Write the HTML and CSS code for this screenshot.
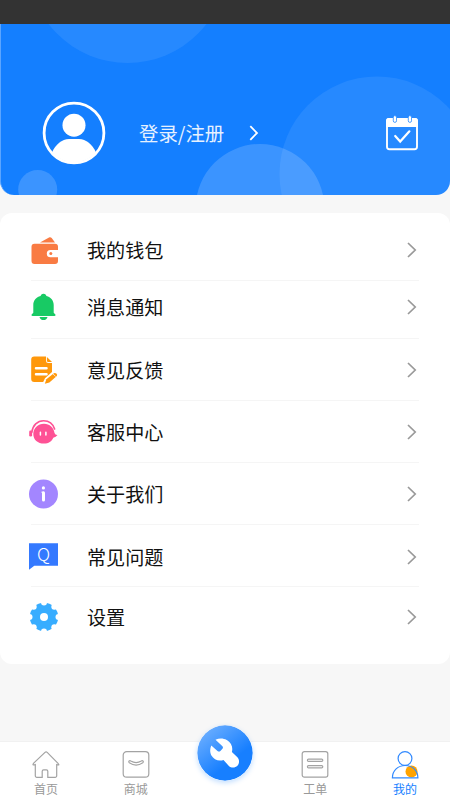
FILE: index.html
```html
<!DOCTYPE html>
<html lang="zh-CN">
<head>
<meta charset="utf-8">
<meta name="viewport" content="width=device-width, initial-scale=1">
<title>我的</title>
<link rel="stylesheet" href="styles.css">
</head>
<body>
<div class="app">
  <div class="status"></div>
  <header class="hero">
    <svg class="bubbles" viewBox="0 0 450 171" fill="#fff">
      <circle cx="127.500" cy="-60.500" r="99.500" fill-opacity=".08"/>
      <circle cx="377" cy="150" r="97.500" fill-opacity=".08"/>
      <circle cx="260" cy="184.400" r="64.400" fill-opacity=".17"/>
      <circle cx="37.700" cy="165.500" r="19.500" fill-opacity=".17"/>
    </svg>
    <svg class="avatar" viewBox="0 0 64 64">
      <circle cx="32" cy="32" r="29.900" fill="none" stroke="#fff" stroke-width="2.800"/>
      <circle cx="32" cy="24.200" r="11.500" fill="#fff"/>
      <path d="M10 51.500C13.500 43.500 20 38 27 38H37C44 38 50.500 43.500 54 51.500A29.900 29.900 0 0 1 10 51.500Z" fill="#fff"/>
    </svg>
    <span class="login">登录/注册</span>
    <svg class="go" viewBox="0 0 10 16"><path d="M1.300 1.200 8 8 1.300 14.800" fill="none" stroke="#fff" stroke-width="1.800"/></svg>
    <svg class="calendar" viewBox="0 0 34 36">
      <rect x="2" y="4" width="30" height="30.200" rx="2.500" fill="none" stroke="#fff" stroke-width="1.900"/>
      <path d="M1.100 12V5.500a2.500 2.500 0 0 1 2.500-2.500H30.400a2.500 2.500 0 0 1 2.500 2.500V12Z" fill="#fff"/>
      <g fill="#fff" stroke="#2489ff" stroke-width=".8"><rect x="8.300" y=".6" width="3.200" height="6.800" rx="1.600"/><rect x="23.300" y=".6" width="3.200" height="6.800" rx="1.600"/></g>
      <path d="m10.200 21 5 5.600 9.200-10.300" fill="none" stroke="#fff" stroke-width="2.200" stroke-linecap="round"/>
    </svg>
  </header>

  <main class="card">
    <a class="row r1">
      <svg class="icon" viewBox="0 0 32 32"><path d="m12 8.500 9-5c1-.5 2-.3 2.700.6l3.300 4.400Z" fill="#f97b43"/><path d="M6.500 9.700H27a3 3 0 0 1 3 3V16h-7.600a3.600 3.600 0 0 0 0 7.200H30V27a3 3 0 0 1-3 3H6.500a3 3 0 0 1-3-3V12.700a3 3 0 0 1 3-3Z" fill="#f97b43"/><circle cx="22.800" cy="19.600" r="1.500" fill="#f97b43"/></svg>
      <span class="label">我的钱包</span><svg class="chev" viewBox="0 0 10 16"><path d="M1 1 8.200 8 1 15"/></svg>
    </a>
    <a class="row r2">
      <svg class="icon" viewBox="0 0 32 32" fill="#18ca64"><path d="M15.500 2.800c1.800 0 2.700 1 2.900 2.300 4.600 1.200 7.300 4.700 7.300 8.900v7.800l1.700 1.700q.7 1.300-.9 1.400H4.500q-1.600-.1-.9-1.400l1.700-1.700V14c0-4.200 2.700-7.700 7.300-8.900.2-1.300 1.100-2.300 2.900-2.300ZM11.500 26h8c-.4 1.900-1.900 3.100-4 3.100s-3.600-1.200-4-3.100Z"/></svg>
      <span class="label">消息通知</span><svg class="chev" viewBox="0 0 10 16"><path d="M1 1 8.200 8 1 15"/></svg>
    </a>
    <a class="row r3">
      <svg class="icon" viewBox="0 0 32 32"><path d="M6.200 2.500H18v4.300a2.200 2.200 0 0 0 2.200 2.200h3.800v8.900L17 24.300 15.200 28H6.200a3 3 0 0 1-3-3V5.500a3 3 0 0 1 3-3Z" fill="#ff980b"/><path d="M18.900 2.900v3.800a1.300 1.300 0 0 0 1.300 1.300H24Z" fill="#ff980b"/><path d="M8 14.300h10.500M8 20.300h10.500" stroke="#fff" stroke-width="2.500" stroke-linecap="round"/><path d="m16.800 29.800 1.600-4.500 7.500-6q1.200-.8 2.500.3t.4 2.300l-7.400 6.600Z" fill="#ff980b"/><path d="m24.500 19.500 3.200 3" stroke="#fff" stroke-width=".7"/></svg>
      <span class="label">意见反馈</span><svg class="chev" viewBox="0 0 10 16"><path d="M1 1 8.200 8 1 15"/></svg>
    </a>
    <a class="row r4">
      <svg class="icon" viewBox="0 0 32 32"><path d="M3.800 16.500C4.600 9.200 9.500 4.700 15.600 4.700c5.400 0 9.500 3.500 11 8.300" fill="none" stroke="#fe5295" stroke-width="1.600" stroke-linecap="round"/><rect x="1.200" y="14.600" width="2.900" height="6" rx="1.300" fill="#fe5295"/><path d="M5.300 18c0-6 4.600-10.300 10.700-10.300 5.600 0 10 4.200 10.500 9.300q.7 2.200 3 2-1.500 2.200-4.200 2.700C23.800 25.200 20.600 27.600 16 27.600c-6.200 0-10.700-3.700-10.700-9.600Z" fill="#fe5295"/><path d="M12.400 16.300v2.600M17.900 16.300v2.600" stroke="#fff" stroke-width="1.500" stroke-linecap="round"/></svg>
      <span class="label">客服中心</span><svg class="chev" viewBox="0 0 10 16"><path d="M1 1 8.200 8 1 15"/></svg>
    </a>
    <a class="row r5">
      <svg class="icon" viewBox="0 0 32 32"><circle cx="15.500" cy="16" r="14.500" fill="#a386ff"/><circle cx="15.400" cy="9.900" r="1.600" fill="#fff"/><path d="M13.500 14.200h2" stroke="#fff" stroke-width="1.200"/><path d="M15.500 14.800v7.300" stroke="#fff" stroke-width="3" stroke-linecap="round"/></svg>
      <span class="label">关于我们</span><svg class="chev" viewBox="0 0 10 16"><path d="M1 1 8.200 8 1 15"/></svg>
    </a>
    <a class="row r6">
      <svg class="icon" viewBox="0 0 32 32"><path d="M1 2.200h29v22.600H6.300L1 28.700Z" fill="#3479ff"/><text class="q" x="15.500" y="20" text-anchor="middle">Q</text></svg>
      <span class="label">常见问题</span><svg class="chev" viewBox="0 0 10 16"><path d="M1 1 8.200 8 1 15"/></svg>
    </a>
    <a class="row r7">
      <svg class="icon" viewBox="0 0 32 32">
        <circle cx="16" cy="16" r="14.200" fill="#38adff"/>
        <g fill="#fff"><circle cx="16" cy="1.500" r="3"/><circle cx="26.300" cy="5.700" r="3"/><circle cx="30.500" cy="16" r="3"/><circle cx="26.300" cy="26.300" r="3"/><circle cx="16" cy="30.500" r="3"/><circle cx="5.700" cy="26.300" r="3"/><circle cx="1.500" cy="16" r="3"/><circle cx="5.700" cy="5.700" r="3"/><circle cx="16" cy="16" r="4"/></g>
      </svg>
      <span class="label">设置</span><svg class="chev" viewBox="0 0 10 16"><path d="M1 1 8.200 8 1 15"/></svg>
    </a>
  </main>

  <nav class="tabs">
    <a class="tab">
      <svg class="tab-icon" viewBox="0 0 30 30"><path d="M4.300 14.600v11.200a1.500 1.500 0 0 0 1.500 1.500h5.400v-6a1.400 1.400 0 0 1 1.400-1.400h2.800a1.400 1.400 0 0 1 1.400 1.400v6h7.400a1.500 1.500 0 0 0 1.500-1.500V14.600q3.700 1.200 1.100-1.500L16.200 2.400a1.600 1.600 0 0 0-2.200 0L2.700 13.100q-2 2.500 1.600 1.500Z"/></svg>
      <span>首页</span>
    </a>
    <a class="tab">
      <svg class="tab-icon" viewBox="0 0 30 30"><rect x="2.200" y="1.600" width="25.600" height="25.600" rx="3.500"/><path d="M8.500 10.800q-1.300.8-.2 1.900 6.900 4.700 13.500 0 1.100-1.100-.2-1.900-.6-.3-1.300.2-5.200 3.100-10.500 0-.7-.5-1.300-.2Z"/></svg>
      <span>商城</span>
    </a>
    <a class="tab main">
      <svg class="fab" viewBox="0 0 56 56">
        <defs><linearGradient id="blue" x1="0" y1="0" x2=".8" y2="1"><stop offset="0" stop-color="#7bb7ff"/><stop offset=".7" stop-color="#177fff"/></linearGradient></defs>
        <circle cx="28" cy="28" r="27.700" fill="url(#blue)"/>
        <path d="M18.500 14.800C24 11.800 31 13.900 33.900 19c1.500 2.700 1.700 5.300 1 8l5.500 5.300c2.200 2.200 2.200 6.200 0 8.500s-6.200 2.400-8.500.2L26.500 35C21.500 36.700 16.800 34.500 14.400 30.500 12.700 27.500 12.900 23.300 14.300 20.400L20.500 26q1.600 1.200 2.900 0l2-2.200q1.200-1.400-.2-2.800Z" fill="#fff"/>
      </svg>
    </a>
    <a class="tab">
      <svg class="tab-icon" viewBox="0 0 30 30"><rect x="2.200" y="1.600" width="25.600" height="25.600" rx="2.200"/><rect x="7.400" y="9.200" width="15.400" height="2.200" rx="1.100"/><rect x="7.400" y="15.600" width="15.400" height="2.200" rx="1.100"/></svg>
      <span>工单</span>
    </a>
    <a class="tab active">
      <svg class="tab-icon" viewBox="0 0 30 30"><circle cx="21.500" cy="21.500" r="6" fill="#ffa300" stroke="none"/><circle cx="15" cy="8.500" r="6.900"/><path d="M2.400 27.800C2.500 20.500 8 15.500 15.200 15.500S27.800 20.500 27.900 27.800Z"/></svg>
      <span>我的</span>
    </a>
  </nav>
</div>
</body>
</html>
```
FILE: styles.css
```css
* { box-sizing: border-box; }

body {
  margin: 0;
  background: #f7f7f7;
  font-family: "Noto Sans CJK SC", sans-serif;
}

.app {
  display: flex;
  flex-direction: column;
  width: 450px;
  height: 800px;
  overflow: hidden;
}

.status {
  height: 24px;
  background: #333;
}

.hero {
  position: relative;
  display: flex;
  align-items: center;
  height: 171px;
  padding: 47px 31px 0 42px;
  overflow: hidden;
  border-left: 1px solid #5ba5ff;
  border-radius: 0 0 14px 14px;
  background: #147fff;
}

.bubbles {
  position: absolute;
  top: 0;
  left: -1px;
  width: 450px;
  height: 171px;
}

.avatar, .login, .go, .calendar { position: relative; flex: none; }

.avatar { width: 64px; height: 64px; margin-left: -1px; }

.login {
  margin-left: 33px;
  color: #e6f1ff;
  font-size: 19.4px;
  font-weight: 400;
  line-height: 28px;
}

.go { width: 10px; height: 16px; margin-left: 25px; }

.calendar { width: 34px; height: 36px; margin-left: auto; }

.card {
  height: 451px;
  margin-top: 18px;
  padding: 0 31px 0 28px;
  border-radius: 12px;
  background: #fff;
}

.row {
  display: flex;
  align-items: center;
  height: 62px;
}

.row:not(.r7) {
  background: linear-gradient(#f5f5f5, #f5f5f5) right bottom / 388px 1px no-repeat;
}

.r1 { height: 68px; padding-top: 6px; }
.r2 { height: 58px; padding-bottom: 6px; }
.r6 { padding-top: 2px; }
.r7 { height: 60px; }

.icon { width: 32px; height: 32px; }

.label {
  flex: 1;
  margin-left: 27px;
  color: #111;
  font-size: 19.1px;
  line-height: 28px;
}

.chev {
  width: 10px;
  height: 16px;
  margin-right: 2px;
  fill: none;
  stroke: #999;
  stroke-width: 1.7px;
}

.q {
  fill: #fff;
  font-family: "Noto Sans CJK SC", sans-serif;
  font-size: 18px;
  font-weight: 300;
}

.tabs {
  display: flex;
  height: 59px;
  margin-top: auto;
  padding-left: 1px;
  border-top: 1px solid #f1f1f1;
  background: #fff;
}

.tab {
  display: flex;
  flex: 1;
  flex-direction: column;
  align-items: center;
  padding-top: 8px;
  color: #999;
  font-size: 12px;
  line-height: 18px;
}

.tab-icon {
  width: 30px;
  height: 30px;
  fill: none;
  stroke: #a3a3a3;
  stroke-width: 1.2px;
}

.active { color: #1580ff; }
.active .tab-icon { stroke: #3089ff; }

.main { padding-top: 0; }

.fab {
  flex: none;
  width: 56px;
  height: 56px;
  margin-top: -17px;
  border-radius: 50%;
  box-shadow: 0 2px 5px rgba(20, 127, 255, .25);
}
```
